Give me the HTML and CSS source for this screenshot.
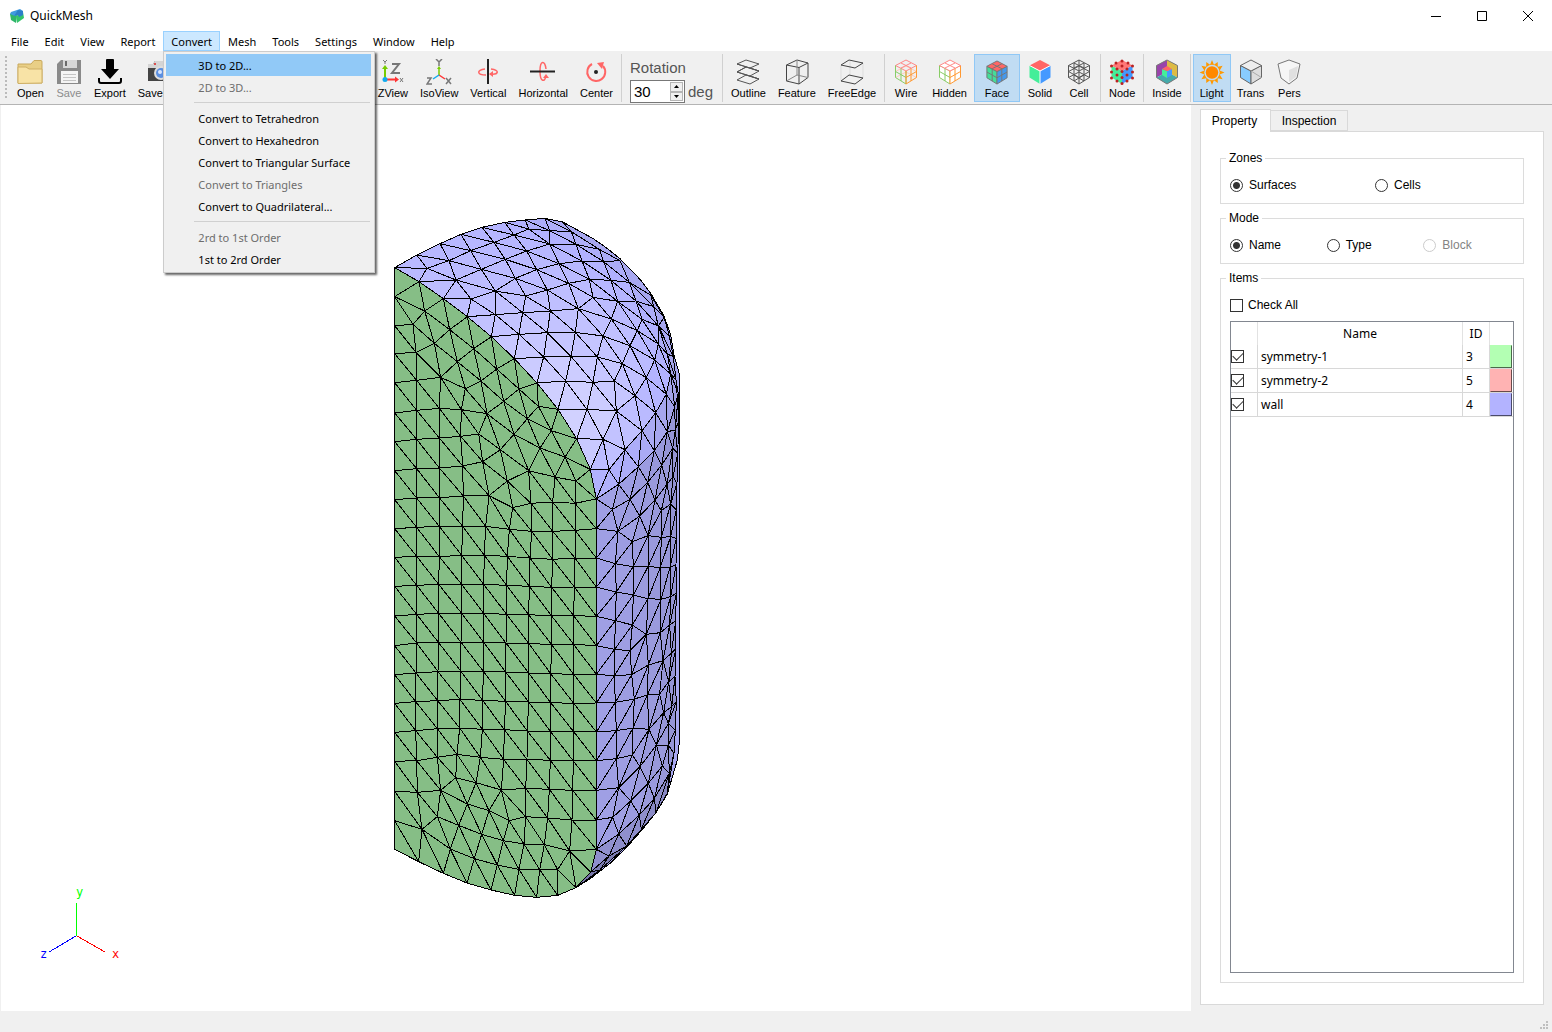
FILE: index.html
```html
<!DOCTYPE html>
<html lang="en">
<head>
    <meta charset="UTF-8">
    <title>QuickMesh</title>
    <link rel="stylesheet" href="styles.css">
</head>
<body>
    <header class="titlebar">
        <svg class="app-icon" width="16" height="16" viewBox="0 0 16 16">
            <path d="M1 6 L6 4 L8 7 L7 15 L2 12 Z" fill="#2fb56a"/>
            <path d="M2 4 L11 1 L14 3 L13 6 L6 8 L1 6 Z" fill="#3f9be0"/>
            <path d="M7 8 L14 4 L15 10 L8 15 Z" fill="#33c46b"/>
            <path d="M9 2 L14 3 L14 7 L10 9 L9 7 L5 8 Z" fill="#2c7fc9"/>
        </svg>
        <h1 class="title">QuickMesh</h1>
        <div class="window-buttons">
            <button type="button" aria-label="Minimize"><svg width="12" height="12"><path d="M1 6.5 H11" stroke="#000"/></svg></button>
            <button type="button" aria-label="Maximize"><svg width="12" height="12"><path d="M1.5 1.5 H10.5 V10.5 H1.5 Z" stroke="#000" fill="none"/></svg></button>
            <button type="button" aria-label="Close"><svg width="12" height="12"><path d="M1 1 L11 11 M11 1 L1 11" stroke="#000"/></svg></button>
        </div>
    </header>

    <nav class="menubar">
        <button type="button">File</button>
        <button type="button">Edit</button>
        <button type="button">View</button>
        <button type="button">Report</button>
        <div class="menu-holder">
            <button type="button" class="open">Convert</button>
            <div class="menu">
                <button type="button" class="active">3D to 2D...</button>
                <button type="button" disabled>2D to 3D...</button>
                <hr>
                <button type="button">Convert to Tetrahedron</button>
                <button type="button">Convert to Hexahedron</button>
                <button type="button">Convert to Triangular Surface</button>
                <button type="button" disabled>Convert to Triangles</button>
                <button type="button">Convert to Quadrilateral...</button>
                <hr>
                <button type="button" disabled>2rd to 1st Order</button>
                <button type="button">1st to 2rd Order</button>
            </div>
        </div>
        <button type="button">Mesh</button>
        <button type="button">Tools</button>
        <button type="button">Settings</button>
        <button type="button">Window</button>
        <button type="button">Help</button>
    </nav>

    <div class="toolbar">
        <div class="group files">
            <button type="button" class="tool">
                <svg width="26" height="26" viewBox="0 0 26 26">
                    <path d="M1 24 V5 H14 L17 1.5 H24 Q25 1.5 25 3 V24 Z" fill="#e9cf86" stroke="#c9a95c"/>
                    <path d="M1 24.5 V8 H9 L12 10 H25 V24 Z" fill="#f8e3a6" stroke="#cfb066"/>
                </svg>
                Open
            </button>
            <button type="button" class="tool" disabled>
                <svg width="26" height="26" viewBox="0 0 26 26">
                    <path d="M1 5 L5 1 H25 V25 H1 Z" fill="#8a8a8a"/>
                    <path d="M7 1 H21 V9 H7 Z" fill="#d8d8d8"/>
                    <path d="M9 2 H11 V7 H9 Z" fill="#6a6a6a"/>
                    <path d="M5 12 H22 V24 H5 Z" fill="#f4f4f4"/>
                    <path d="M7 15.5 H20 M7 18.5 H20 M7 21.5 H20" stroke="#c4c4c4"/>
                </svg>
                Save
            </button>
            <button type="button" class="tool">
                <svg width="26" height="26" viewBox="0 0 26 26">
                    <path d="M9 1 Q9 0 10 0 H16 Q17 0 17 1 V10 H22 L13 20 L4 10 H9 Z" fill="#000"/>
                    <path d="M2 19 V22 Q2 24 4 24 H22 Q24 24 24 22 V19" fill="none" stroke="#000" stroke-width="2"/>
                </svg>
                Export
            </button>
            <button type="button" class="tool">
                <svg width="26" height="26" viewBox="0 0 26 26">
                    <path d="M2 5 H7 L9 2 H20 L22 5 H25 V22 H2 Z" fill="#444"/>
                    <path d="M2 5 H7 L9 2 H20 L22 5 H25 V9 H2 Z" fill="#d5d5d5"/>
                    <circle cx="9" cy="5" r="1" fill="#d22"/>
                    <circle cx="15" cy="14" r="7" fill="#ddd"/>
                    <circle cx="15" cy="14" r="5" fill="#5b8fe0"/>
                    <circle cx="14" cy="13" r="2" fill="#d7e6ff"/>
                </svg>
                SaveImg
            </button>
        </div>
        <div class="group views">
            <button type="button" class="tool">
                <svg width="26" height="26" viewBox="0 0 26 26">
                    <path d="M5 22 V9" stroke="#7c0" stroke-width="2"/>
                    <path d="M2 10 L5 6 L8 10 Z" fill="#7c0"/>
                    <path d="M5 20.5 H16" stroke="#f33" stroke-width="2"/>
                    <path d="M15 17.5 L19 20.5 L15 23.5 Z" fill="#f33"/>
                    <circle cx="5" cy="20.5" r="2.5" fill="#1ae"/>
                    <path d="M12 5 H19 L12 14 H20" fill="none" stroke="#777" stroke-width="2"/>
                    <path d="M3 1 L5 3 L7 1 M5 3 V5 M20 19 L23 23 M23 19 L20 23" fill="none" stroke="#777"/>
                </svg>
                ZView
            </button>
            <button type="button" class="tool">
                <svg width="26" height="26" viewBox="0 0 26 26">
                    <path d="M13 17 V9" stroke="#7c0" stroke-width="1.5"/>
                    <path d="M11 10 L13 7 L15 10 Z" fill="#7c0"/>
                    <path d="M13 16 L19 20" stroke="#f33" stroke-width="1.5"/>
                    <path d="M13 16 L7 20" stroke="#1ae" stroke-width="1.5"/>
                    <path d="M10 0 L13 3 L16 0 M13 3 V7 M1 19 H5 L1 25 H6 M20 19 L25 25 M25 19 L20 25" fill="none" stroke="#777" stroke-width="1.5"/>
                </svg>
                IsoView
            </button>
            <button type="button" class="tool">
                <svg width="26" height="26" viewBox="0 0 26 26">
                    <path d="M10 10 C1 11 2 16 11 16 M16 10 C25 11 24 16 15 15" fill="none" stroke="#f66" stroke-width="1.5"/>
                    <path d="M13 0 V25" stroke="#222" stroke-width="2"/>
                    <path d="M18 12 L14 15 L18 18 Z" fill="#f66"/>
                </svg>
                Vertical
            </button>
            <button type="button" class="tool">
                <svg width="26" height="26" viewBox="0 0 26 26">
                    <path d="M16 10 C15 1 10 1 10 12 C10 24 15 23 16 17" fill="none" stroke="#f66" stroke-width="1.5"/>
                    <path d="M0 12.5 H25" stroke="#222" stroke-width="2"/>
                    <path d="M13 19 L16 15 L19 19 Z" fill="#f66"/>
                </svg>
                Horizontal
            </button>
            <button type="button" class="tool">
                <svg width="26" height="26" viewBox="0 0 26 26">
                    <path d="M9 5 A9 9 0 1 0 20 7" fill="none" stroke="#f66" stroke-width="2"/>
                    <path d="M14 4 L21 3 L19 10 Z" fill="#f66"/>
                    <circle cx="13" cy="13" r="2" fill="#222"/>
                </svg>
                Center
            </button>
        </div>
        <div class="rotation">
            <label for="angle">Rotation</label>
            <span class="spin">
                <input id="angle" type="text" value="30">
                <span class="spin-buttons">
                    <button type="button" aria-label="Increase"><svg width="5" height="3"><path d="M0 3 L2.5 0 L5 3 Z"/></svg></button>
                    <button type="button" aria-label="Decrease"><svg width="5" height="3"><path d="M0 0 L2.5 3 L5 0 Z"/></svg></button>
                </span>
            </span>
            <span class="unit">deg</span>
        </div>
        <div class="group">
            <button type="button" class="tool">
                <svg width="26" height="26" viewBox="0 0 26 26" fill="none" stroke="#555">
                    <path d="M11 1 L24 5 L15 9 L2 5 Z M11 8 L24 12 L15 17 L2 13 Z M11 16 L24 20 L15 25 L2 21 Z M11 8 L2 13 M15 9 L24 12 M15 17 L24 20 M2 5 L24 12 M2 13 L24 20"/>
                </svg>
                Outline
            </button>
            <button type="button" class="tool">
                <svg width="26" height="26" viewBox="0 0 26 26" fill="none" stroke="#444">
                    <path d="M2.5 6 L13 1 L24 4 L15 8.5 Z M2.5 6 V22 L15 25 V8.5 M15 25 L24 18.5 V4"/>
                    <path d="M13 1 V16 L2.5 22 M13 16 L24 18.5" stroke="#888"/>
                </svg>
                Feature
            </button>
            <button type="button" class="tool">
                <svg width="26" height="26" viewBox="0 0 26 26" fill="none" stroke="#444">
                    <path d="M2 6 V22 M24 4 V19 M11 2 V16" stroke="#ddd"/>
                    <path d="M10 1 L24 4 L16 9 L2 6 Z M10 16 L24 19 L16 25 L2 22 Z"/>
                </svg>
                FreeEdge
            </button>
        </div>
        <div class="group modes">
            <button type="button" class="tool">
                <svg width="26" height="26" viewBox="0 0 26 26" fill="none">
                    <path d="M2.5 18.5 L13 13 L23.5 18.5 M2.5 12.5 L13 7 L23.5 12.5" stroke="#fcb"/>
                    <path d="M2.5 6.5 L13 1 L23.5 6.5 L13 12 Z M8 4 L18 9 M18 4 L8 9" stroke="#f88"/>
                    <path d="M2.5 6.5 V18.5 L13 25 M2.5 12.5 L13 18.5 M8 9.5 V22 M13 12 V25" stroke="#8c6"/>
                    <path d="M23.5 6.5 V18.5 L13 25 V12 M23.5 12.5 L13 18.5 M18 9.5 V22" stroke="#f93"/>
                </svg>
                Wire
            </button>
            <button type="button" class="tool">
                <svg width="26" height="26" viewBox="0 0 26 26" fill="#fff">
                    <path d="M2.5 6.5 V18.5 L13 25 V12 Z M2.5 12.5 L13 18.5 M8 9.5 V22" stroke="#8c6"/>
                    <path d="M23.5 6.5 V18.5 L13 25 V12 Z M23.5 12.5 L13 18.5 M18 9.5 V22" stroke="#f93"/>
                    <path d="M2.5 6.5 L13 1 L23.5 6.5 L13 12 Z M8 4 L18 9 M18 4 L8 9" stroke="#f88"/>
                </svg>
                Hidden
            </button>
            <button type="button" class="tool wide pressed">
                <svg width="26" height="26" viewBox="0 0 26 26" stroke="#777">
                    <path d="M2.5 6.5 V18.5 L13 25 V12 Z" fill="#4d9"/>
                    <path d="M23.5 6.5 V18.5 L13 25 V12 Z" fill="#49e"/>
                    <path d="M2.5 6.5 L13 1 L23.5 6.5 L13 12 Z" fill="#f66"/>
                    <path d="M8 4 L18 9 V22 M18 4 L8 9 V22 M2.5 12.5 L13 18.5 L23.5 12.5" fill="none"/>
                </svg>
                Face
            </button>
            <button type="button" class="tool">
                <svg width="26" height="26" viewBox="0 0 26 26">
                    <path d="M2.5 6.5 V18.5 L13 25 V12 Z" fill="#4e9"/>
                    <path d="M23.5 6.5 V18.5 L13 25 V12 Z" fill="#49f"/>
                    <path d="M2.5 6.5 L13 1 L23.5 6.5 L13 12 Z" fill="#f66"/>
                    <path d="M2.5 6.5 L13 12 L23.5 6.5 M13 12 V25" fill="none" stroke="#fff"/>
                </svg>
                Solid
            </button>
            <button type="button" class="tool">
                <svg width="26" height="26" viewBox="0 0 26 26" fill="none" stroke="#555">
                    <path d="M2.5 6.5 L13 1 L23.5 6.5 V18.5 L13 25 L2.5 18.5 Z M2.5 6.5 L13 12 L23.5 6.5 M13 1 V25 M8 4 L18 9 V22 M18 4 L8 9 V22 M2.5 12.5 L13 18.5 L23.5 12.5 M2.5 12.5 L13 7 L23.5 12.5 M2.5 18.5 L13 13 L23.5 18.5 M8 4 V9 M18 4 V9 M8 22 L18 16 M18 22 L8 16"/>
                </svg>
                Cell
            </button>
        </div>
        <div class="group">
            <button type="button" class="tool">
                <svg width="26" height="26" viewBox="0 0 26 26">
                    <path d="M2.5 6.5 V18.5 L13 25 V12 Z" fill="#4e9"/>
                    <path d="M23.5 6.5 V18.5 L13 25 V12 Z" fill="#49f"/>
                    <path d="M2.5 6.5 L13 1 L23.5 6.5 L13 12 Z" fill="#f77"/>
                    <g fill="#b22">
                        <circle cx="13" cy="2" r="1.5"/><circle cx="7" cy="4" r="1.5"/><circle cx="19" cy="4" r="1.5"/>
                        <circle cx="2.5" cy="7" r="1.5"/><circle cx="13" cy="7" r="1.5"/><circle cx="23.5" cy="7" r="1.5"/>
                        <circle cx="8" cy="10" r="1.5"/><circle cx="18" cy="10" r="1.5"/><circle cx="13" cy="12.5" r="1.5"/>
                        <circle cx="2.5" cy="13" r="1.5"/><circle cx="23.5" cy="13" r="1.5"/><circle cx="8" cy="16" r="1.5"/>
                        <circle cx="18" cy="16" r="1.5"/><circle cx="13" cy="18.5" r="1.5"/><circle cx="2.5" cy="19" r="1.5"/>
                        <circle cx="23.5" cy="19" r="1.5"/><circle cx="8" cy="22" r="1.5"/><circle cx="18" cy="22" r="1.5"/>
                        <circle cx="13" cy="24.5" r="1.5"/>
                    </g>
                </svg>
                Node
            </button>
        </div>
        <div class="group">
            <button type="button" class="tool">
                <svg width="26" height="26" viewBox="0 0 26 26">
                    <path d="M2.5 6.5 L13 1 V13 L2.5 18.5 Z" fill="#94a"/>
                    <path d="M23.5 6.5 L13 1 V13 L23.5 18.5 Z" fill="#db4"/>
                    <path d="M2.5 18.5 L13 13 L23.5 18.5 L13 25 Z" fill="#4aa"/>
                    <path d="M2.5 6.5 L13 1 L23.5 6.5 V18.5 L13 25 L2.5 18.5 Z" fill="none" stroke="#777"/>
                    <path d="M8 10 L13 12 V19 L8 16 Z" fill="#4e9"/>
                    <path d="M18 10 L13 12 V19 L18 16 Z" fill="#49f"/>
                    <path d="M8 10 L13 7 L18 10 L13 12 Z" fill="#f66"/>
                </svg>
                Inside
            </button>
        </div>
        <div class="group last">
            <button type="button" class="tool pressed">
                <svg width="26" height="26" viewBox="0 0 26 26">
                    <path d="M13 0 L15 5 L19 2 L19 7 L24 6 L21 11 L26 13 L21 15 L24 20 L19 19 L19 24 L15 21 L13 26 L11 21 L7 24 L7 19 L2 20 L5 15 L0 13 L5 11 L2 6 L7 7 L7 2 L11 5 Z" fill="#f90"/>
                    <circle cx="13" cy="13" r="8" fill="#c0dcf3"/>
                    <circle cx="13" cy="13" r="6.5" fill="#f80"/>
                </svg>
                Light
            </button>
            <button type="button" class="tool">
                <svg width="26" height="26" viewBox="0 0 26 26" stroke="#666">
                    <path d="M2.5 6.5 V18.5 L13 25 V12 Z" fill="#8cf"/>
                    <path d="M23.5 6.5 V18.5 L13 25 V12 Z" fill="#ddd"/>
                    <path d="M2.5 6.5 L13 1 L23.5 6.5 L13 12 Z" fill="#eee"/>
                    <path d="M13 12 L23.5 18.5" stroke="#aaa"/>
                </svg>
                Trans
            </button>
            <button type="button" class="tool">
                <svg width="26" height="26" viewBox="0 0 26 26">
                    <path d="M2 5 L13 1 L24 5 L21 19 L13 25 L5 19 Z" fill="#f6f6f6" stroke="#777"/>
                    <path d="M13 11 L22 7 L20 18 L13 23 Z" fill="#e0e0e0"/>
                </svg>
                Pers
            </button>
        </div>
    </div>

    <main class="workspace">
        <section class="viewport">
            <svg class="scene" width="100%" height="100%">
                <svg id="mesh" x="379" y="95" width="310" height="710" viewBox="0 0 930 2130" shape-rendering="crispEdges"></svg>
                <g shape-rendering="crispEdges" fill="none">
                    <path d="M75.5 831 V798" stroke="#0f0"/>
                    <path d="M76 831 L104 847" stroke="#f00"/>
                    <path d="M75 831 L48 847" stroke="#00f"/>
                </g>
                <g class="axis-names">
                    <text x="75" y="791" fill="#0f0">y</text>
                    <text x="111" y="853" fill="#f00">x</text>
                    <text x="39" y="853" fill="#00f">z</text>
                </g>
            </svg>
        </section>

        <aside class="side">
            <div class="tabs">
                <button type="button" class="tab current">Property</button>
                <button type="button" class="tab">Inspection</button>
            </div>
            <div class="pane">
                <fieldset class="two">
                    <legend>Zones</legend>
                    <label><input type="radio" name="zones" checked>Surfaces</label>
                    <label><input type="radio" name="zones">Cells</label>
                </fieldset>
                <fieldset class="three">
                    <legend>Mode</legend>
                    <label><input type="radio" name="mode" checked>Name</label>
                    <label><input type="radio" name="mode">Type</label>
                    <label class="off"><input type="radio" name="mode" disabled>Block</label>
                </fieldset>
                <fieldset class="items">
                    <legend>Items</legend>
                    <div class="items-body">
                        <label><input type="checkbox">Check All</label>
                        <div class="table-frame">
                            <table>
                                <thead>
                                    <tr><th class="col-check"></th><th>Name</th><th class="col-id">ID</th><th class="col-color"></th></tr>
                                </thead>
                                <tbody>
                                    <tr><td class="check"><input type="checkbox" aria-label="symmetry-1" checked></td><td>symmetry-1</td><td>3</td><td class="color"><button type="button" class="swatch green" aria-label="Color of symmetry-1"></button></td></tr>
                                    <tr><td class="check"><input type="checkbox" aria-label="symmetry-2" checked></td><td>symmetry-2</td><td>5</td><td class="color"><button type="button" class="swatch red" aria-label="Color of symmetry-2"></button></td></tr>
                                    <tr><td class="check"><input type="checkbox" aria-label="wall" checked></td><td>wall</td><td>4</td><td class="color"><button type="button" class="swatch blue" aria-label="Color of wall"></button></td></tr>
                                </tbody>
                            </table>
                        </div>
                    </div>
                </fieldset>
            </div>
        </aside>
    </main>

    <footer class="statusbar">
        <svg width="9" height="9" fill="#bfbfbf"><path d="M6 0h2v2h-2z M3 3h2v2h-2z M6 3h2v2h-2z M0 6h2v2h-2z M3 6h2v2h-2z M6 6h2v2h-2z"/></svg>
    </footer>

    <script src="mesh.js"></script>
</body>
</html>
```

FILE: styles.css
```css
* {
    box-sizing: border-box;
}
body {
    margin: 0;
    height: 100vh;
    display: flex;
    flex-direction: column;
    background: #f0f0f0;
    color: #000;
    font-family: "Liberation Sans", Arial, sans-serif;
    font-size: 12px;
}
button {
    font: inherit;
    color: inherit;
    background: none;
    border: none;
    padding: 0;
    margin: 0;
}
svg {
    display: block;
}

/* title bar */
.titlebar {
    display: flex;
    align-items: center;
    height: 31px;
    padding: 0 1px 0 9px;
    background: #fff;
    font-family: "Noto Sans", sans-serif;
}
.title {
    flex: 1;
    margin: 0 0 0 5px;
    font-size: 12px;
    font-weight: normal;
}
.window-buttons {
    display: flex;
}
.window-buttons button {
    width: 46px;
    height: 31px;
    display: flex;
    align-items: center;
    justify-content: center;
}

/* menu bar */
.menubar {
    display: flex;
    height: 22px;
    padding-left: 3px;
    background: #fff;
    border-bottom: 2px solid #f0f0f0;
    font-family: "Noto Sans", sans-serif;
    font-size: 11px;
}
.menubar > button,
.menu-holder > button {
    height: 20px;
    padding: 0 8px;
}
.menu-holder {
    position: relative;
}
.menu-holder > .open {
    background: #cce8ff;
    box-shadow: inset 0 0 0 1px #99d1ff;
}
.menu {
    position: absolute;
    z-index: 2;
    top: 20px;
    left: 0;
    width: 212px;
    padding: 2px;
    background: #f0f0f0;
    border: 1px solid #ccc;
    box-shadow: 2px 2px 2px rgba(0, 0, 0, 0.6);
}
.menu button {
    display: block;
    width: 205px;
    height: 22px;
    padding-left: 32px;
    text-align: left;
    white-space: nowrap;
}
.menu button:disabled {
    color: #6d6d6d;
}
.menu .active {
    background: #91c9f7;
}
.menu hr {
    height: 1px;
    margin: 4px 2px 4px 28px;
    border: none;
    background: #d0d0d0;
}

/* toolbar */
.toolbar {
    display: flex;
    height: 52px;
    padding: 1px 0 2px 5px;
    border-bottom: 1px solid #b4b4b4;
    font-size: 11px;
}
.toolbar::before {
    content: "";
    width: 2px;
    margin: 2px 4px 2px 0;
    background: repeating-linear-gradient(#bbb 0 2px, transparent 2px 4px);
}
.group {
    display: flex;
    padding-right: 2px;
    margin-right: 2px;
    border-right: 1px solid #d0d0d0;
}
.files {
    flex: none;
    width: 220px;
    margin-right: 0;
}
.views {
    flex: none;
    width: 256px;
    margin-left: 135px;
    justify-content: flex-end;
}
.modes {
    gap: 1px;
}
.files,
.last {
    border-right: none;
}
.tool {
    display: flex;
    flex-direction: column;
    align-items: center;
    flex: none;
    min-width: 36px;
    height: 48px;
    padding: 5px 6px 0;
    line-height: 17px;
}
.tool:disabled {
    color: #8c8c8c;
}
.tool.wide {
    width: 46px;
}
.tool.pressed {
    padding-top: 6px;
    background: #c0dcf3;
    box-shadow: inset 0 0 0 1px #90c8f6;
}
.rotation {
    display: grid;
    grid-template-columns: 55px auto;
    gap: 4px 3px;
    align-content: start;
    align-items: center;
    padding: 6px 9px 0 6px;
    margin-right: 2px;
    border-right: 1px solid #d0d0d0;
    font-size: 15px;
    line-height: 16px;
    color: #555;
}
.rotation label {
    grid-column: 1 / 3;
    line-height: 16px;
}
.spin {
    display: flex;
    height: 23px;
    background: #fff;
    border: 1px solid #777;
}
.spin input {
    flex: 1;
    min-width: 0;
    padding: 0 3px;
    border: none;
    background: none;
    font: inherit;
    color: #000;
}
.spin-buttons {
    display: flex;
    flex-direction: column;
    width: 15px;
    padding: 1px;
}
.spin-buttons button {
    flex: 1;
    display: flex;
    align-items: center;
    justify-content: center;
    background: #f0f0f0;
    border: 1px solid #b5b5b5;
}

/* work area */
.workspace {
    flex: 1;
    display: flex;
    min-height: 0;
}
.viewport {
    flex: 1;
    margin-left: 1px;
    background: #fff;
    overflow: hidden;
}
.axis-names {
    font-family: "DejaVu Sans Mono", monospace;
    font-size: 12px;
}
.side {
    width: 361px;
    display: flex;
    flex-direction: column;
    padding: 4px 8px 6px 9px;
}
.tabs {
    display: flex;
    align-items: flex-end;
    height: 22px;
}
.tab {
    height: 21px;
    width: 77px;
    border: 1px solid #d9d9d9;
    border-left: none;
}
.tab.current {
    position: relative;
    width: 71px;
    height: 23px;
    margin-bottom: -1px;
    padding: 0 2px 0 0;
    background: #fff;
    border-left: 1px solid #d9d9d9;
    border-bottom: none;
}
.pane {
    flex: 1;
    display: flex;
    flex-direction: column;
    gap: 6px;
    padding: 18px 19px 21px;
    background: #fff;
    border: 1px solid #d9d9d9;
}
fieldset {
    display: grid;
    column-gap: 6px;
    align-items: start;
    height: 54px;
    min-width: 0;
    margin: 0;
    padding: 12px 9px 0;
    border: 1px solid #dcdcdc;
}
legend {
    margin-left: -4px;
    padding: 0 3px;
    line-height: 16px;
}
.two {
    grid-template-columns: 1fr 1fr;
}
.three {
    grid-template-columns: 1fr 1fr 1fr;
}
label {
    display: flex;
    align-items: center;
    gap: 5px;
    line-height: 14px;
}
label.off {
    color: #838383;
}
input[type="radio"],
input[type="checkbox"] {
    appearance: none;
    flex: none;
    width: 13px;
    height: 13px;
    margin: 0;
    border: 1px solid #333;
    background: #fff;
}
input[type="radio"] {
    border-radius: 50%;
    margin-right: 1px;
}
input[type="radio"]:checked {
    background: radial-gradient(circle, #333 0 3px, #fff 4px);
}
input[type="radio"]:disabled {
    border-color: #ccc;
}
input[type="checkbox"]:checked {
    display: grid;
    place-items: center;
}
input[type="checkbox"]:checked::before {
    content: "";
    width: 9px;
    height: 5px;
    margin-top: -3px;
    border: solid #333;
    border-width: 0 0 1px 1px;
    transform: rotate(-45deg);
}
.items {
    flex: 1;
    display: block;
    height: auto;
    padding-bottom: 9px;
}
.items-body {
    display: flex;
    flex-direction: column;
    height: 100%;
}
.table-frame {
    flex: 1;
    margin-top: 9px;
    border: 1px solid #828790;
}
table {
    width: 100%;
    table-layout: fixed;
    border-collapse: separate;
    border-spacing: 0;
    font-family: "Noto Sans", sans-serif;
}
th {
    height: 23px;
    padding: 0;
    font-weight: normal;
    border-right: 1px solid #e2e2e2;
}
td {
    height: 24px;
    padding: 0 3px;
    border-right: 1px solid #d8d8d8;
    border-bottom: 1px solid #d8d8d8;
}
th:last-child,
td:last-child {
    border-right: none;
}
.col-check,
.col-id {
    width: 27px;
}
.col-color {
    width: 23px;
}
td.check,
td.color {
    padding: 0;
}
.swatch {
    display: block;
    width: 22px;
    height: 23px;
    border: 1px solid;
}
.swatch.green {
    background: #b3ffb3;
    border-color: #b3ffb3 #4a6a4a #4a6a4a #b3ffb3;
}
.swatch.red {
    background: #ffb3b3;
    border-color: #ffb3b3 #6a4a4a #6a4a4a #ffb3b3;
}
.swatch.blue {
    background: #b3b3ff;
    border-color: #b3b3ff #4a4a6a #4a4a6a #b3b3ff;
}

/* status bar */
.statusbar {
    display: flex;
    align-items: flex-end;
    justify-content: flex-end;
    height: 21px;
    padding: 0 3px 2px 0;
}
```

FILE: mesh.js
```js
// Draws the half capsule: a flat symmetry plane and the revolved wall beside it.
var svg = document.getElementById('mesh');

// rim of the symmetry plane, apex to base
var RIM = [[44,203],[117,245],[190,296],[262,350],[334,410],[403,476],[471,549],[534,628],[590,716],[631,808],[649,897],
    [649,986],[649,1074],[649,1161],[649,1249],[649,1337],[649,1423],[649,1509],[649,1596],[649,1682],[649,1771],[649,1860],
    [649,1948],[632,2016],[588,2063],[533,2086],[470,2092],[404,2086],[333,2070],[261,2049],[190,2020],[116,1985],[44,1948]];

var PLANE = [[44,290],[134,333],[44,377],[99,373],[209,389],[44,461],[108,457],[163,430],[281,446],[232,485],[350,507],
    [44,548],[110,541],[182,532],[256,566],[303,543],[417,567],[44,639],[110,631],[178,625],[244,629],[321,641],[371,604],
    [475,619],[442,656],[514,692],[296,702],[402,703],[361,749],[308,785],[480,744],[555,771],[446,812],[382,843],[525,831],[588,843],
    [44,725],[110,718],[178,714],[242,709],[44,812],[110,806],[178,804],[248,798],
    [44,899],[110,894],[178,893],[250,888],[327,887],[398,923],[453,910],[518,906],[585,910],
    [44,986],[110,982],[178,979],[248,979],[317,979],[388,988],[455,994],[518,994],[585,991],
    [44,1072],[110,1069],[178,1070],[245,1066],[313,1066],[382,1069],[450,1074],[518,1078],[585,1074],
    [44,1159],[110,1156],[176,1153],[245,1153],[311,1153],[380,1156],[448,1159],[515,1162],[583,1161],
    [44,1248],[110,1243],[176,1240],[245,1240],[311,1240],[380,1243],[446,1244],[515,1248],[581,1247],
    [44,1337],[110,1329],[176,1328],[243,1327],[311,1327],[378,1329],[446,1330],[515,1334],[581,1333],
    [44,1424],[108,1419],[174,1415],[242,1413],[310,1414],[377,1416],[446,1419],[512,1421],[581,1423],
    [44,1510],[107,1505],[173,1502],[240,1498],[308,1501],[377,1504],[446,1506],[512,1508],[581,1510],
    [44,1597],[107,1592],[172,1586],[239,1584],[307,1588],[373,1589],[442,1593],[512,1595],[581,1595],
    [44,1684],[110,1682],[172,1672],[231,1663],[301,1672],[371,1678],[441,1678],[511,1681],[580,1683],
    [44,1774],[112,1777],[182,1771],[227,1733],[288,1748],[364,1770],[437,1765],[508,1768],[578,1771],
    [262,1812],[327,1832],[387,1862],[437,1850],[503,1854],[576,1860],
    [44,1862],[126,1888],[172,1850],[236,1876],[305,1903],[370,1922],[432,1932],[493,1934],[569,1953],
    [211,1947],[283,1976],[352,1995],[417,2008],[479,2009],[533,2009]];

var WALL = [[110,165],[180,131],[243,103],[306,82],[374,67],[436,60],[495,55],[548,66],
    [141,205],[207,182],[272,152],[342,127],[402,105],[446,87],[509,92],[574,95],
    [228,240],[304,208],[376,178],[440,153],[509,132],[588,133],[658,148],
    [346,273],[406,235],[470,209],[537,191],[606,183],[671,185],[720,182],
    [273,297],[437,288],[502,270],[566,250],[628,238],[693,241],[748,247],[780,243],
    [346,344],[428,338],[511,333],[595,326],[639,292],[713,304],[768,303],[812,285],[821,320],
    [417,403],[502,398],[586,397],[669,408],[694,357],[772,392],[786,358],[835,378],[852,352],
    [491,471],[573,469],[652,471],[727,491],[750,437],[824,480],[835,432],[868,408],
    [557,543],[639,547],[703,543],[799,533],[872,522],[862,462],[880,470],
    [621,628],[709,633],[765,587],[859,583],[827,638],[888,540],[895,580],[884,620],
    [669,718],[786,692],[735,749],[823,752],[862,695],[886,690],[897,660],
    [687,809],[775,800],[716,853],[845,795],[878,745],[893,760],
    [697,928],[750,898],[803,847],[861,853],[879,830],[891,850],
    [714,994],[779,948],[825,900],[844,932],[872,912],[889,930],
    [757,1025],[804,1007],[844,1012],[872,1010],[889,1015],
    [706,1091],[760,1100],[804,1100],[841,1102],[870,1102],[888,1095],
    [709,1176],[760,1185],[804,1196],[843,1198],[872,1190],[889,1180],
    [706,1262],[757,1275],[799,1303],[841,1298],[869,1275],[887,1262],
    [704,1348],[750,1352],[805,1395],[849,1382],[874,1360],[888,1345],
    [703,1427],[755,1424],[802,1485],[839,1482],[866,1445],[885,1430],
    [706,1507],[763,1497],[851,1538],[875,1520],[889,1505],
    [709,1592],[759,1584],[807,1588],[829,1635],[865,1570],[886,1590],
    [709,1676],[757,1665],[780,1700],[847,1698],[865,1635],[882,1660],
    [716,1763],[752,1803],[805,1750],[823,1795],[862,1780],[868,1720],
    [698,1852],[778,1845],[716,1902],[784,1888],[828,1838],
    [687,1968],[740,1938],[660,2010]];

var SILHOUETTE = [[44,203],[110,165],[180,131],[243,103],[306,82],[374,67],[436,60],[495,55],[548,66],[574,80],[640,116],[680,144],
    [720,176],[780,238],[812,280],[852,348],[872,405],[882,465],[898,522],[898,1625],[892,1680],[862,1782],[828,1838],
    [784,1892],[740,1942],[690,1990],[632,2035],[588,2063]];

// isometric projection factors, both relative to the apex
var SX = Math.SQRT1_2, SY = Math.sqrt(2 / 3), TILT = Math.sqrt(1 / 3);

function delaunay(pts) {
    var all = pts.concat([[-1e4, -1e4], [1e4, -1e4], [0, 2e4]]);
    var n = pts.length;
    function circle(a, b, c) {
        var ax = all[a][0], ay = all[a][1];
        var bx = all[b][0] - ax, by = all[b][1] - ay;
        var cx = all[c][0] - ax, cy = all[c][1] - ay;
        var d = 2 * (bx * cy - by * cx) || 1e-12;
        var b2 = bx * bx + by * by, c2 = cx * cx + cy * cy;
        var ux = (cy * b2 - by * c2) / d, uy = (bx * c2 - cx * b2) / d;
        return { v: [a, b, c], x: ux + ax, y: uy + ay, r: ux * ux + uy * uy };
    }
    var tris = [circle(n, n + 1, n + 2)];
    for (var i = 0; i < n; i++) {
        var edges = {}, keep = [];
        tris.forEach(function(t) {
            var dx = all[i][0] - t.x, dy = all[i][1] - t.y;
            if (dx * dx + dy * dy >= t.r) { keep.push(t); return; }
            for (var k = 0; k < 3; k++) {
                var p = t.v[k], q = t.v[(k + 1) % 3];
                var key = Math.min(p, q) + '_' + Math.max(p, q);
                if (edges[key]) delete edges[key]; else edges[key] = [p, q];
            }
        });
        Object.keys(edges).forEach(function(key) {
            keep.push(circle(edges[key][0], edges[key][1], i));
        });
        tris = keep;
    }
    return tris.map(function(t) { return t.v; }).filter(function(v) {
        return v[0] < n && v[1] < n && v[2] < n;
    });
}

function add(points, fill, stroke) {
    var el = document.createElementNS('http://www.w3.org/2000/svg', 'polygon');
    el.setAttribute('points', points.join(' '));
    el.setAttribute('fill', fill);
    el.setAttribute('stroke', stroke);
    el.setAttribute('stroke-width', 3);
    el.setAttribute('stroke-linejoin', 'round');
    svg.appendChild(el);
}

// radius, height and conformal coordinate along the profile
var STEPS = 20;
var profile = [], w = 0;
for (var i = 0; i + 1 < RIM.length; i++) {
    for (var k = 0; k < STEPS; k++) {
        var x = RIM[i][0] + (RIM[i + 1][0] - RIM[i][0]) * k / STEPS - 44;
        var y = RIM[i][1] + (RIM[i + 1][1] - RIM[i][1]) * k / STEPS - 203;
        var p = { r: x / SX, h: (y - TILT * x) / SY };
        var last = profile[profile.length - 1];
        if (last) w += Math.hypot(p.r - last.r, p.h - last.h) / Math.max(20, p.r);
        p.w = w;
        profile.push(p);
    }
}
// the straight part runs from rim point 10 to rim point 22
var capEnd = 10 * STEPS, baseStart = 22 * STEPS;

// profile entry of the given radius, between two indices
function atRadius(r, from, to) {
    for (var i = from; i < to; i++) {
        var a = profile[i], b = profile[i + 1];
        if ((a.r - r) * (b.r - r) <= 0 && a.r !== b.r) {
            var f = (r - a.r) / (b.r - a.r);
            return { r: r, h: a.h + f * (b.h - a.h), w: a.w + f * (b.w - a.w) };
        }
    }
    return null;
}

function makeHit(p, phi, pt) {
    return {
        u: phi,
        w: p.w,
        err: Math.abs(203 + SY * p.h + TILT * p.r * Math.sin(phi) - pt[1]),
        depth: SY * p.r * Math.sin(phi) - TILT * p.h,
        xyz: [p.r * Math.cos(phi), p.r * Math.sin(phi), -p.h]
    };
}

// puts a screen point back on the wall, on the side that faces the viewer
function lift(pt) {
    var hits = [], dx = Math.max(0, pt[0] - 44);
    var start = profile[capEnd], end = profile[baseStart];
    if (dx === 0) return makeHit(profile[0], 0, pt);

    var phi = Math.min(Math.PI / 4, Math.acos(Math.min(1, dx / start.r)));
    var h = (pt[1] - 203 - TILT * start.r * Math.sin(phi)) / SY;
    var f = (h - start.h) / (end.h - start.h);
    if (f >= 0 && f <= 1) hits.push(makeHit({ r: start.r, h: h, w: start.w + f * (end.w - start.w) }, phi, pt));

    for (var a = -300; a <= 300; a++) {
        phi = a / 300 * Math.PI / 4;
        var r = Math.min(start.r - 0.01, dx / Math.cos(phi));
        if (dx / Math.cos(phi) > start.r + 8) continue;
        [atRadius(r, 0, capEnd), atRadius(r, baseStart, profile.length - 1)].forEach(function(p) {
            if (p) hits.push(makeHit(p, phi, pt));
        });
    }
    var near = hits.reduce(function(m, h) { return h.err < m.err ? h : m; });
    var good = hits.filter(function(h) { return h.err < Math.max(3, near.err + 1); });
    var front = good.reduce(function(m, h) { return h.depth > m.depth ? h : m; });
    return good.filter(function(h) { return h.depth > front.depth - 20; })
        .reduce(function(m, h) { return h.err < m.err ? h : m; });
}

function shade(a, b, c) {
    var p = [b[0] - a[0], b[1] - a[1], b[2] - a[2]];
    var q = [c[0] - a[0], c[1] - a[1], c[2] - a[2]];
    var n = [p[1] * q[2] - p[2] * q[1], p[2] * q[0] - p[0] * q[2], p[0] * q[1] - p[1] * q[0]];
    var len = Math.hypot(n[0], n[1], n[2]) || 1;
    // outward is away from a point halfway down the axis
    if (n[0] * a[0] + n[1] * a[1] + n[2] * (a[2] + 1000) < 0) len = -len;
    n = n.map(function(v) { return v / len; });
    var shine = Math.max(0, 0.35 * n[0] + 0.6 * n[1] + 0.7 * n[2]);
    var level = 0.7 + 0.1 * n[0] + 0.17 * n[1] + 0.33 * n[2] + 0.14 * Math.pow(shine, 8);
    var rg = Math.round(Math.min(255, 178 * level));
    return 'rgb(' + rg + ',' + rg + ',' + Math.round(Math.min(255, 255 * level)) + ')';
}

add(SILHOUETTE.concat(RIM.slice(0, 25).reverse()), '#a8a8f0', '#000');
var wall = RIM.slice(0, 25).concat(WALL);
var lifted = wall.map(lift);
delaunay(lifted.map(function(l, i) { return [l.u + i * 1e-7, l.w]; })).forEach(function(t) {
    var s = t.map(function(i) { return wall[i]; });
    var longest = Math.max(Math.hypot(s[0][0] - s[1][0], s[0][1] - s[1][1]),
        Math.hypot(s[1][0] - s[2][0], s[1][1] - s[2][1]), Math.hypot(s[2][0] - s[0][0], s[2][1] - s[0][1]));
    if (longest > 135) return;
    add(s, shade(lifted[t[0]].xyz, lifted[t[1]].xyz, lifted[t[2]].xyz), '#000');
});
add([[896, 522], [899, 522], [899, 1625], [896, 1625]], '#000', 'none');

add(RIM, '#86be86', '#000');
var plane = RIM.concat(PLANE);
delaunay(plane.map(function(p, i) {
    return [p[0] / SX + i * 1e-5, (p[1] - TILT * p[0]) / SY];
})).forEach(function(t) {
    var s = t.map(function(i) { return plane[i]; });
    var area = (s[1][0] - s[0][0]) * (s[2][1] - s[0][1]) - (s[2][0] - s[0][0]) * (s[1][1] - s[0][1]);
    if (Math.abs(area) > 900) add(s, '#86be86', '#000');
});
```
